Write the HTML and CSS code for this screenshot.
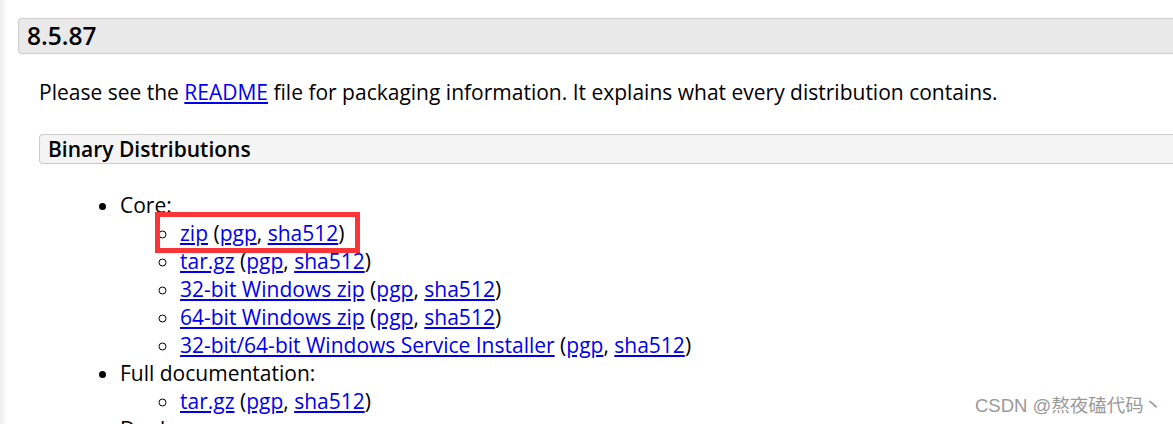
FILE: index.html
```html
<!DOCTYPE html>
<html>
<head>
<meta charset="utf-8">
<link rel="stylesheet" href="styles.css">
</head>
<body>
<div class="edge"></div>
<div class="page">
  <h3 class="version">8.5.87</h3>
  <div class="content">
    <p class="intro">Please see the <a href="#">README</a> file for packaging information. It explains what every distribution contains.</p>
    <h4 class="section">Binary Distributions</h4>
    <ul class="outer">
      <li>Core:
        <ul class="inner">
          <li class="marked"><a href="#">zip</a> (<a href="#">pgp</a>, <a href="#">sha512</a>)<span class="redbox"></span></li>
          <li><a href="#">tar.gz</a> (<a href="#">pgp</a>, <a href="#">sha512</a>)</li>
          <li><a href="#">32-bit Windows zip</a> (<a href="#">pgp</a>, <a href="#">sha512</a>)</li>
          <li><a href="#">64-bit Windows zip</a> (<a href="#">pgp</a>, <a href="#">sha512</a>)</li>
          <li><a href="#">32-bit/64-bit Windows Service Installer</a> (<a href="#">pgp</a>, <a href="#">sha512</a>)</li>
        </ul>
      </li>
      <li>Full documentation:
        <ul class="inner">
          <li><a href="#">tar.gz</a> (<a href="#">pgp</a>, <a href="#">sha512</a>)</li>
        </ul>
      </li>
      <li>Deployer:</li>
    </ul>
  </div>
</div>
<div class="watermark">CSDN @熬夜磕代码丶</div>
</body>
</html>
```

FILE: styles.css
```css
html, body {
  margin: 0;
  padding: 0;
  background: #ffffff;
  overflow: hidden;
  height: 424px;
}
body {
  font-family: "Open Sans", "Noto Sans", sans-serif;
  color: #000;
  position: relative;
}
.edge {
  position: absolute;
  left: 0;
  top: 0;
  bottom: 0;
  width: 7px;
  background: linear-gradient(to right, #ececec, #ffffff);
}
.page {
  padding: 18px 0 0 18px;
}
.version {
  margin: 0;
  height: 34px;
  line-height: 34px;
  padding: 0 8px;
  background: #e9e9e9;
  border: 1px solid #cccccc;
  border-right: none;
  border-radius: 4px 0 0 4px;
  font-size: 24.5px;
  font-weight: 600;
}
.content {
  padding-left: 21px;
}
.intro {
  margin: 24px 0 0 0;
  font-size: 21px;
  line-height: 28px;
}
a {
  color: #0000ee;
  text-decoration: underline;
  text-underline-offset: 2px;
}
.section {
  margin: 28px 0 0 0;
  height: 28px;
  line-height: 28px;
  padding: 0 8px;
  background: #f4f4f4;
  border: 1px solid #cccccc;
  border-right: none;
  border-radius: 4px 0 0 4px;
  font-size: 21px;
  font-weight: 600;
}
.outer {
  margin: 27px 0 0 0;
  padding-left: 81px;
  font-size: 21px;
  line-height: 28px;
  list-style: disc;
}
.inner {
  margin: 0;
  padding-left: 60px;
  list-style: circle;
}
.marked {
  position: relative;
}
.redbox {
  position: absolute;
  left: -25px;
  top: -7px;
  width: 195px;
  height: 31px;
  border: 5px solid #fb3537;
}
.watermark {
  position: absolute;
  left: 975px;
  top: 391px;
  font-family: "Liberation Sans", "Noto Sans CJK SC", sans-serif;
  font-size: 18.5px;
  color: #9a9a9a;
  white-space: nowrap;
}
```
